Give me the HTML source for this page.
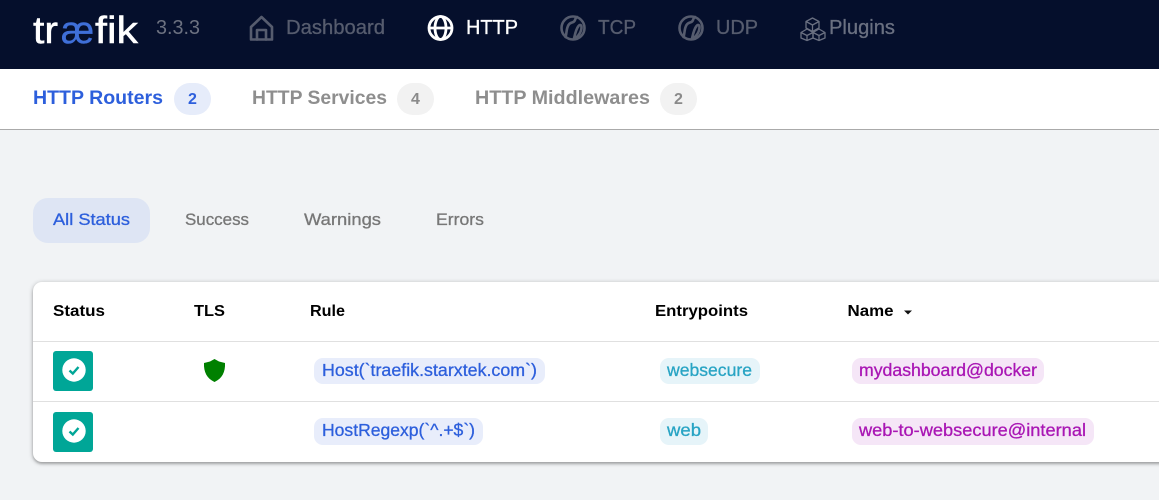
<!DOCTYPE html>
<html lang="en">
<head>
<meta charset="utf-8">
<title>Traefik Dashboard</title>
<style>
html,body{margin:0;padding:0;width:1159px;height:500px;overflow:hidden;background:#f1f3f5;}
#page{position:relative;width:1159px;height:500px;overflow:hidden;}
.b{position:absolute;display:block;}
svg{position:absolute;left:0;top:0;}
text{font-family:"Liberation Sans",sans-serif;}
.m{stroke-width:.3px;stroke:currentColor;}
</style>
</head>
<body>
<div id="page">
  <div class="b" style="left:0;top:0;width:1159px;height:69px;background:#050f2c"></div>
  <div class="b" style="left:0;top:69px;width:1159px;height:60px;background:#fff;border-bottom:1px solid #aaa;box-sizing:content-box"></div>
  <div class="b" style="left:174px;top:83px;width:37px;height:32px;border-radius:16px;background:#e6ecfa"></div>
  <div class="b" style="left:397px;top:83px;width:37px;height:32px;border-radius:16px;background:#f2f2f2"></div>
  <div class="b" style="left:660px;top:83px;width:37px;height:32px;border-radius:16px;background:#f2f2f2"></div>
  <div class="b" style="left:33px;top:198px;width:117px;height:45px;border-radius:15px;background:#dee5f4"></div>
  <div class="b" style="left:33px;top:282px;width:1160px;height:180px;border-radius:9px;background:#fff;box-shadow:0 1px 5px rgba(0,0,0,.3),0 2px 2px rgba(0,0,0,.16)"></div>
  <div class="b" style="left:33px;top:341px;width:1126px;height:1px;background:#e0e0e0"></div>
  <div class="b" style="left:33px;top:401px;width:1126px;height:1px;background:#e0e0e0"></div>
  <div class="b" style="left:53px;top:351px;width:40px;height:40px;border-radius:3px;background:#00a697"></div>
  <div class="b" style="left:53px;top:412px;width:40px;height:40px;border-radius:3px;background:#00a697"></div>
  <div class="b" style="left:314px;top:358px;width:231px;height:26px;border-radius:9px;background:#e8edfb"></div>
  <div class="b" style="left:314px;top:418px;width:169px;height:27px;border-radius:9px;background:#e8edfb"></div>
  <div class="b" style="left:660px;top:358px;width:100px;height:26px;border-radius:9px;background:#e6f4f9"></div>
  <div class="b" style="left:660px;top:418px;width:48px;height:27px;border-radius:9px;background:#e6f4f9"></div>
  <div class="b" style="left:852px;top:358px;width:192px;height:26px;border-radius:9px;background:#f5e6f7"></div>
  <div class="b" style="left:852px;top:418px;width:242px;height:27px;border-radius:9px;background:#f5e6f7"></div>

  <svg width="1159" height="500" viewBox="0 0 1159 500" xmlns="http://www.w3.org/2000/svg">
    <!-- logo -->
    <g font-size="38" fill="#fff">
      <text x="33" y="43" textLength="25" lengthAdjust="spacingAndGlyphs" stroke="#fff" stroke-width=".5">tr</text>
      <text x="61" y="43" textLength="33" lengthAdjust="spacingAndGlyphs" fill="#3f6fd8" stroke="#3f6fd8" stroke-width=".5">æ</text>
      <text x="95" y="43" textLength="43" lengthAdjust="spacingAndGlyphs" stroke="#fff" stroke-width=".5">fik</text>
    </g>
    <text x="156" y="34" font-size="20" fill="#6c7180" textLength="44" lengthAdjust="spacingAndGlyphs">3.3.3</text>

    <!-- nav -->
    <g fill="none" stroke="#565c6e" stroke-width="2.6" stroke-linejoin="round" stroke-linecap="round">
      <path d="M251 27 L261.5 17 L272 27 V39.5 H251 Z"/>
      <path d="M257 39.5 V30 H266 V39.5"/>
      <circle cx="573" cy="28" r="11.5"/>
      <path d="M565.5 37 C567 33 566 29 568.5 25 C570.5 21.5 574 23.5 575 20 C575.5 18.5 576 17.5 577 17"/>
      <path d="M574 38.5 C577 38 581 33 581.5 28 C581.8 25 580 24 578.5 26 C576 29 575 34 574 38.5"/>
      <circle cx="691" cy="28" r="11.5"/>
      <path d="M683.5 37 C685 33 684 29 686.5 25 C688.5 21.5 692 23.5 693 20 C693.5 18.5 694 17.5 695 17"/>
      <path d="M692 38.5 C695 38 699 33 699.5 28 C699.8 25 698 24 696.5 26 C694 29 693 34 692 38.5"/>
    </g>
    <g fill="none" stroke="#6a7081" stroke-width="1.3" stroke-linejoin="round">
      <path d="M812.5 18 L819 21.5 V28 L812.5 31.5 L806 28 V21.5 Z M806 21.5 L812.5 25 L819 21.5 M812.5 25 V31.5"/>
      <path d="M807 29 L813 32.5 V38 L807 40.5 L801 38 V32.5 Z M801 32.5 L807 35.5 L813 32.5 M807 35.5 V40.5"/>
      <path d="M819 29 L825 32.5 V38 L819 40.5 L813 38 V32.5 Z M813 32.5 L819 35.5 L825 32.5 M819 35.5 V40.5"/>
    </g>
    <g fill="none" stroke="#fff" stroke-width="2.8">
      <circle cx="440.5" cy="28" r="11.5"/>
      <ellipse cx="440.5" cy="28" rx="5.5" ry="11.5"/>
      <path d="M429 28 H452"/>
    </g>
    <g font-size="20">
      <text class="m" x="286" y="34" color="#565c6e" fill="#565c6e" textLength="99" lengthAdjust="spacingAndGlyphs">Dashboard</text>
      <text class="m" x="466" y="34" color="#fff" fill="#fff" textLength="52" lengthAdjust="spacingAndGlyphs">HTTP</text>
      <text class="m" x="598" y="34" color="#565c6e" fill="#565c6e" textLength="38" lengthAdjust="spacingAndGlyphs">TCP</text>
      <text class="m" x="716" y="34" color="#565c6e" fill="#565c6e" textLength="42" lengthAdjust="spacingAndGlyphs">UDP</text>
      <text class="m" x="829" y="34" color="#6a7081" fill="#6a7081" textLength="66" lengthAdjust="spacingAndGlyphs">Plugins</text>
    </g>

    <!-- tabs -->
    <g font-size="19" font-weight="bold">
      <text x="33" y="104" fill="#2d5fdc" textLength="130" lengthAdjust="spacingAndGlyphs">HTTP Routers</text>
      <text x="252" y="104" fill="#8e8e8e" textLength="135" lengthAdjust="spacingAndGlyphs">HTTP Services</text>
      <text x="475" y="104" fill="#8e8e8e" textLength="175" lengthAdjust="spacingAndGlyphs">HTTP Middlewares</text>
    </g>
    <g font-size="16" font-weight="bold" text-anchor="middle">
      <text x="192.5" y="104" fill="#2d5fdc">2</text>
      <text x="415.5" y="104" fill="#8a8a8a">4</text>
      <text x="678.5" y="104" fill="#8a8a8a">2</text>
    </g>

    <!-- status filter -->
    <g font-size="17">
      <text class="m" x="53" y="225" color="#2d5fdc" fill="#2d5fdc" textLength="77" lengthAdjust="spacingAndGlyphs">All Status</text>
      <text class="m" x="185" y="225" color="#777" fill="#777" textLength="64" lengthAdjust="spacingAndGlyphs">Success</text>
      <text class="m" x="304" y="225" color="#777" fill="#777" textLength="77" lengthAdjust="spacingAndGlyphs">Warnings</text>
      <text class="m" x="436" y="225" color="#777" fill="#777" textLength="48" lengthAdjust="spacingAndGlyphs">Errors</text>
    </g>

    <!-- table head -->
    <g font-size="16" font-weight="bold" fill="#000">
      <text x="53" y="316" textLength="52" lengthAdjust="spacingAndGlyphs">Status</text>
      <text x="194" y="316" textLength="31" lengthAdjust="spacingAndGlyphs">TLS</text>
      <text x="310" y="316" textLength="35" lengthAdjust="spacingAndGlyphs">Rule</text>
      <text x="655" y="316" textLength="93" lengthAdjust="spacingAndGlyphs">Entrypoints</text>
      <text x="847.5" y="316" textLength="46" lengthAdjust="spacingAndGlyphs">Name</text>
    </g>
    <path d="M904 310.5 H912 L908 314.5 Z" fill="#111"/>

    <!-- status icons -->
    <circle cx="74" cy="370" r="11.7" fill="#fff"/>
    <path d="M69.5 370.5 L72.8 373.5 L78.5 367" fill="none" stroke="#00a697" stroke-width="2.4"/>
    <circle cx="74" cy="431" r="11.7" fill="#fff"/>
    <path d="M69.5 431.5 L72.8 434.5 L78.5 428" fill="none" stroke="#00a697" stroke-width="2.4"/>

    <!-- shield -->
    <path d="M214.5 359 L219 361.5 L225 363 C225.5 372 222 378.5 214.5 382 C207 378.5 203.5 372 204 363 L210 361.5 Z" fill="#008000"/>

    <!-- chips -->
    <g font-size="17.5" fill="#2d5fdc">
      <text class="m" color="#2d5fdc" x="322" y="376" textLength="215" lengthAdjust="spacingAndGlyphs">Host(`traefik.starxtek.com`)</text>
      <text class="m" color="#2d5fdc" x="322" y="436" textLength="153" lengthAdjust="spacingAndGlyphs">HostRegexp(`^.+$`)</text>
    </g>
    <g font-size="17.5" fill="#28a4c4">
      <text class="m" color="#28a4c4" x="667" y="376" textLength="85" lengthAdjust="spacingAndGlyphs">websecure</text>
      <text class="m" color="#28a4c4" x="667" y="436" textLength="34" lengthAdjust="spacingAndGlyphs">web</text>
    </g>
    <g font-size="17.5" fill="#a916b4">
      <text class="m" color="#a916b4" x="859" y="376" textLength="178" lengthAdjust="spacingAndGlyphs">mydashboard@docker</text>
      <text class="m" color="#a916b4" x="859" y="436" textLength="227" lengthAdjust="spacingAndGlyphs">web-to-websecure@internal</text>
    </g>
  </svg>
</div>
</body>
</html>
